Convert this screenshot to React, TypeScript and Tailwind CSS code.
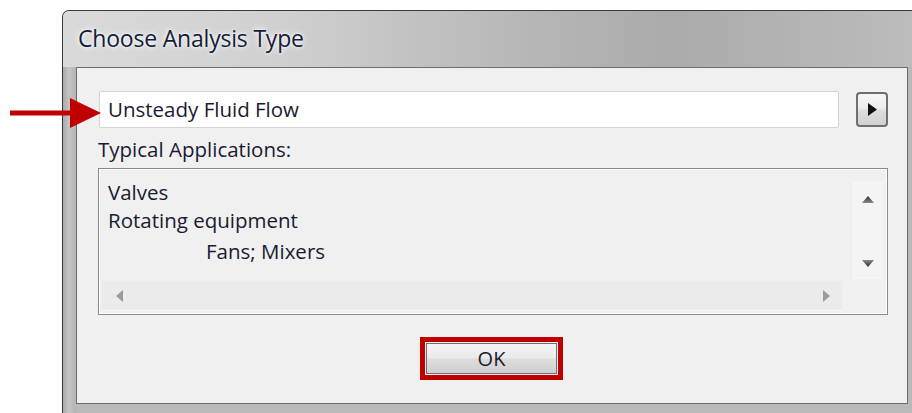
import React from "react";

function TriUp() {
  return (
    <svg width="12" height="7" viewBox="0 0 12 7">
      <defs>
        <linearGradient id="gu" x1="0" y1="0" x2="0" y2="1">
          <stop offset="0" stopColor="#2a2a2a" />
          <stop offset="1" stopColor="#8a8a8a" />
        </linearGradient>
      </defs>
      <polygon points="6,0 12,7 0,7" fill="url(#gu)" />
    </svg>
  );
}

function TriDown() {
  return (
    <svg width="12" height="7" viewBox="0 0 12 7">
      <defs>
        <linearGradient id="gd" x1="0" y1="0" x2="0" y2="1">
          <stop offset="0" stopColor="#8a8a8a" />
          <stop offset="1" stopColor="#2a2a2a" />
        </linearGradient>
      </defs>
      <polygon points="0,0 12,0 6,7" fill="url(#gd)" />
    </svg>
  );
}

function TriLeft() {
  return (
    <svg width="7" height="12" viewBox="0 0 7 12">
      <polygon points="7,0 7,12 0,6" fill="#9a9a9a" />
    </svg>
  );
}

function TriRight() {
  return (
    <svg width="7" height="12" viewBox="0 0 7 12">
      <polygon points="0,0 7,6 0,12" fill="#9a9a9a" />
    </svg>
  );
}

export default function App() {
  return (
    <div className="relative w-[912px] h-[413px] overflow-hidden bg-white pl-[62px] pt-[10px] font-['Open_Sans','Noto_Sans',sans-serif] text-[#1a1a30]">
      {/* dialog window */}
      <div className="w-[870px] h-[420px] rounded-tl-[7px] border-l border-t border-[#3a3a3a] bg-[#b9b9b9] flex flex-col overflow-hidden">
        {/* title bar */}
        <div className="h-[56px] shrink-0 flex items-center pl-[15px] pb-[1px] bg-[linear-gradient(90deg,#dadada_0%,#d0d0d0_25%,#b5b5b5_55%,#ababab_70%,#bdbdbd_100%)]">
          <span className="text-[23px] leading-none tracking-[-0.2px] text-[#141d38] [text-shadow:0_0_6px_#ffffff,0_0_3px_#ffffff]">
            Choose Analysis Type
          </span>
        </div>

        {/* frame + client area */}
        <div className="flex flex-1">
          <div className="w-[13px] shrink-0 bg-[linear-gradient(90deg,#a9a9a9_0%,#c4c4c4_45%,#b4b4b4_100%)]" />
          <div className="w-[832px] h-[337px] shrink-0 border border-[#6c6c6c] bg-[#f0f0f0] flex flex-col">
            {/* analysis type selector */}
            <div className="flex items-start mt-[23px] ml-[22px]">
              <div className="w-[740px] h-[37px] rounded-[2px] border border-[#d0d4da] bg-white flex items-center pl-[8px] text-[20.5px]">
                Unsteady Fluid Flow
              </div>
              <div className="ml-[17px] mt-[1px] w-[32px] h-[35px] rounded-[4px] border-2 border-[#6f6f6f] bg-[linear-gradient(180deg,#f6f6f6_0%,#ececec_45%,#dcdcdc_55%,#d2d2d2_100%)] flex items-center justify-center">
                <svg width="9" height="13" viewBox="0 0 9 13">
                  <polygon points="0,0 9,6.5 0,13" fill="#111111" />
                </svg>
              </div>
            </div>

            <div className="ml-[21px] mt-[8px] text-[20.5px] leading-[26px]">Typical Applications:</div>

            {/* applications list */}
            <div className="ml-[21px] mt-[6px] w-[790px] h-[147px] border border-[#8a8a8a] bg-[#f0f0f0] flex flex-col">
              <div className="flex-1 border border-white p-[2px] flex flex-col">
                <div className="flex flex-1">
                  <div className="flex-1 pl-[6px] pt-[6px] text-[20.5px] leading-[28px]">
                    <div>Valves</div>
                    <div>Rotating equipment</div>
                    <div className="pl-[98px] mt-[3px]">Fans; Mixers</div>
                  </div>
                  <div className="w-[30px] mt-[10px] mb-[2px] mr-[1px] bg-[#f4f4f4] border border-[#f7f7f7] flex flex-col items-center justify-between pt-[13px] pb-[11px]">
                    <TriUp />
                    <TriDown />
                  </div>
                </div>
                <div className="w-[740px] h-[30px] bg-[#ebebeb] border-b border-[#f6f6f6] flex items-center justify-between pl-[14px] pr-[12px]">
                  <TriLeft />
                  <TriRight />
                </div>
              </div>
            </div>

            {/* OK button, outlined in red */}
            <div className="ml-[343px] mt-[22px] w-[143px] h-[43px] border-[5px] border-[#c00000] flex">
              <div className="flex-1 m-[1px] border border-[#707070] bg-[linear-gradient(180deg,#f3f3f3_0%,#ebebeb_48%,#dddddd_52%,#cfcfcf_100%)] flex items-center justify-center text-[20px] leading-none">
                OK
              </div>
            </div>
          </div>
        </div>
      </div>

      {/* callout arrow */}
      <svg className="absolute left-[10px] top-[98px]" width="92" height="30" viewBox="0 0 92 30">
        <rect x="0" y="12.5" width="64" height="5" fill="#c00000" />
        <polygon points="60,0 91,15 60,30" fill="#c00000" />
      </svg>
    </div>
  );
}
